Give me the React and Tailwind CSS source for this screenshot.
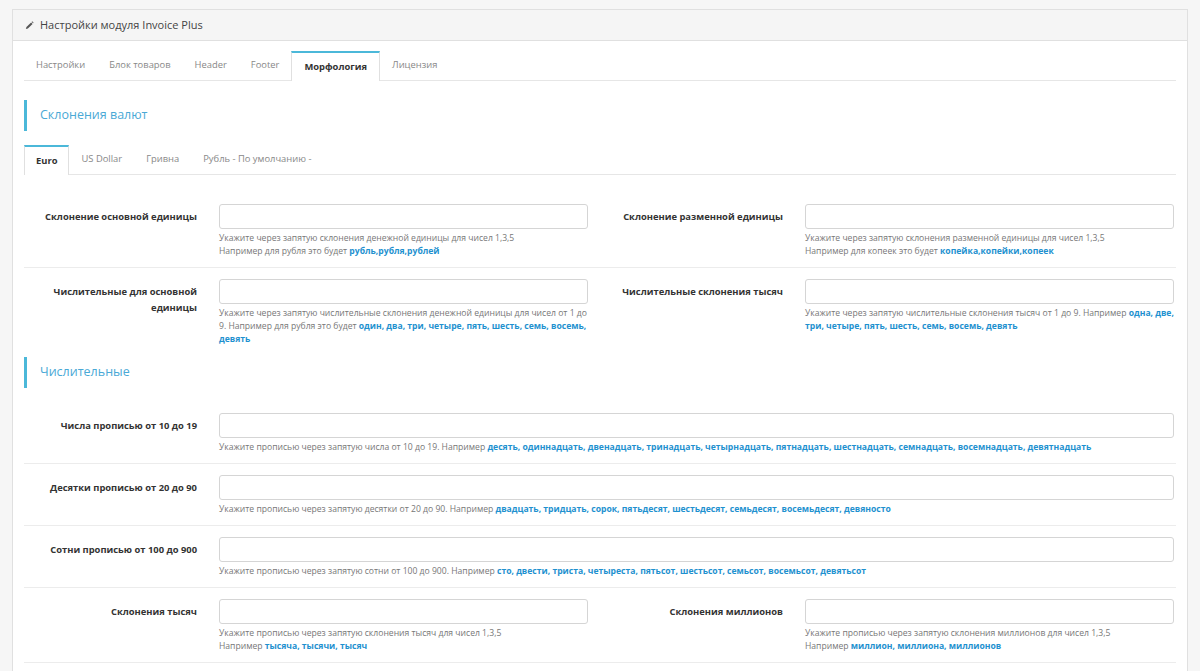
const B = ({ children }) => <b className="font-bold text-[#1e91cf]">{children}</b>;

function Field({ label, hint, lw = 'w-[195px]', pr = 'pr-[12px]' }) {
  return (
    <div className="flex flex-1">
      <div className={`${lw} shrink-0 pr-[22px] pt-[5px] text-right text-[9.4px] font-bold leading-[16px] text-[#333]`}>{label}</div>
      <div className={`flex-1 ${pr}`}>
        <div className="h-[25px] rounded-[3px] border border-[#d5d5d5] bg-white" />
        <div className="mt-[3px] text-[8.6px] leading-[13px] text-[#777]">{hint}</div>
      </div>
    </div>
  );
}

function Row({ children, border = true }) {
  return <div className={`flex pt-[11px] pb-[9px] ${border ? 'border-b border-[#ececec]' : ''}`}>{children}</div>;
}

export default function App() {
  const tabs = ['Настройки', 'Блок товаров', 'Header', 'Footer', 'Морфология', 'Лицензия'];
  const cur = ['Euro', 'US Dollar', 'Гривна', 'Рубль - По умолчанию -'];
  return (
    <div className="h-[671px] overflow-hidden bg-[#f6f6f6] px-[12px] pt-[9px]" style={{ fontFamily: '"Open Sans", sans-serif' }}>
      <div className="border border-[#e0e0e0] bg-white">
        <div className="flex h-[31px] items-center gap-[6px] border-b border-[#e0e0e0] bg-[#f5f5f5] pl-[12px] text-[11px] text-[#444]">
          <svg width="9" height="9" viewBox="0 0 10 10"><path d="M1 9 L1.6 6.8 L6.8 1.6 L8.4 3.2 L3.2 8.4 Z" fill="#555" /><path d="M7.4 1 L8 0.4 L9.6 2 L9 2.6 Z" fill="#555" /></svg>
          Настройки модуля Invoice Plus
        </div>
        <div className="px-[11px] pt-[10px]">
          <div className="flex h-[30px] border-b border-[#e6e6e6] text-[9.4px] text-[#888]">
            {tabs.map((t) => (
              <div key={t} className={t === 'Морфология' ? '-mb-px flex items-center border-x border-t-2 border-x-[#e0e0e0] border-t-[#4bb8d9] bg-white px-[12px] font-bold text-[#333]' : 'flex items-center px-[12px]'}>{t}</div>
            ))}
          </div>
          <div className="mt-[19px] mb-[14px] border-l-[3px] border-[#4bb8d9] py-[6px] pl-[13px] text-[12.5px] text-[#4aa9d6]">Склонения валют</div>
          <div className="flex h-[30px] border-b border-[#e6e6e6] text-[9.4px] text-[#888]">
            {cur.map((t) => (
              <div key={t} className={t === 'Euro' ? '-mb-px flex items-center border-x border-t-2 border-x-[#e0e0e0] border-t-[#4bb8d9] bg-white px-[11px] font-bold text-[#333]' : 'flex items-center px-[12px]'}>{t}</div>
            ))}
          </div>
          <div className="pt-[18px]">
            <Row>
              <Field label="Склонение основной единицы" hint={<>Укажите через запятую склонения денежной единицы для чисел 1,3,5<br />Например для рубля это будет <B>рубль,рубля,рублей</B></>} />
              <Field lw="w-[205px]" pr="pr-[2px]" label="Склонение разменной единицы" hint={<>Укажите через запятую склонения разменной единицы для чисел 1,3,5<br />Например для копеек это будет <B>копейка,копейки,копеек</B></>} />
            </Row>
            <Row border={false}>
              <Field label={<>Числительные для основной<br />единицы</>} hint={<>Укажите через запятую числительные склонения денежной единицы для чисел от 1 до 9. Например для рубля это будет <B>один, два, три, четыре, пять, шесть, семь, восемь, девять</B></>} />
              <Field lw="w-[205px]" pr="pr-[2px]" label="Числительные склонения тысяч" hint={<>Укажите через запятую числительные склонения тысяч от 1 до 9. Например <B>одна, две, три, четыре, пять, шесть, семь, восемь, девять</B></>} />
            </Row>
          </div>
          <div className="mt-[2px] mb-[14px] border-l-[3px] border-[#4bb8d9] py-[6px] pl-[13px] text-[12.5px] text-[#4aa9d6]">Числительные</div>
          <Row>
            <Field pr="pr-[2px]" label="Числа прописью от 10 до 19" hint={<>Укажите прописью через запятую числа от 10 до 19. Например <B>десять, одиннадцать, двенадцать, тринадцать, четырнадцать, пятнадцать, шестнадцать, семнадцать, восемнадцать, девятнадцать</B></>} />
          </Row>
          <Row>
            <Field pr="pr-[2px]" label="Десятки прописью от 20 до 90" hint={<>Укажите прописью через запятую десятки от 20 до 90. Например <B>двадцать, тридцать, сорок, пятьдесят, шестьдесят, семьдесят, восемьдесят, девяносто</B></>} />
          </Row>
          <Row>
            <Field pr="pr-[2px]" label="Сотни прописью от 100 до 900" hint={<>Укажите прописью через запятую сотни от 100 до 900. Например <B>сто, двести, триста, четыреста, пятьсот, шестьсот, семьсот, восемьсот, девятьсот</B></>} />
          </Row>
          <Row>
            <Field label="Склонения тысяч" hint={<>Укажите прописью через запятую склонения тысяч для чисел 1,3,5<br />Например <B>тысяча, тысячи, тысяч</B></>} />
            <Field lw="w-[205px]" pr="pr-[2px]" label="Склонения миллионов" hint={<>Укажите прописью через запятую склонения миллионов для чисел 1,3,5<br />Например <B>миллион, миллиона, миллионов</B></>} />
          </Row>
          <Row>
            <Field label="" hint="" />
            <Field lw="w-[205px]" pr="pr-[2px]" label="" hint="" />
          </Row>
        </div>
      </div>
    </div>
  );
}
